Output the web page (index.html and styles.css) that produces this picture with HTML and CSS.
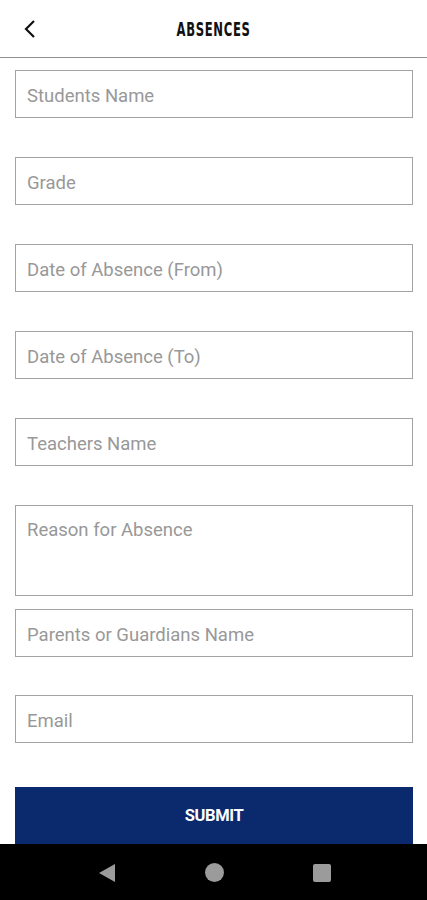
FILE: index.html
```html
<!DOCTYPE html>
<html lang="en">
<head>
    <meta charset="UTF-8">
    <meta name="viewport" content="width=device-width, initial-scale=1.0">
    <title>Absences</title>
    <link rel="stylesheet" href="styles.css">
</head>
<body>
    <div class="screen">
        <header class="top-bar">
            <button class="back" aria-label="Back">
                <svg width="14" height="20" viewBox="0 0 14 20">
                    <path d="M11 2 L3 10 L11 18" fill="none" stroke="#111" stroke-width="2.2"/>
                </svg>
            </button>
            <h1>ABSENCES</h1>
        </header>

        <form class="absence-form" id="absenceForm">
            <input type="text" class="field" placeholder="Students Name">
            <input type="text" class="field" placeholder="Grade">
            <input type="text" class="field" placeholder="Date of Absence (From)">
            <input type="text" class="field" placeholder="Date of Absence (To)">
            <input type="text" class="field" placeholder="Teachers Name">
            <textarea class="field reason" placeholder="Reason for Absence"></textarea>
            <input type="text" class="field parents" placeholder="Parents or Guardians Name">
            <input type="email" class="field email" placeholder="Email">
            <button type="submit" class="submit">SUBMIT</button>
        </form>

        <nav class="system-nav">
            <svg width="18" height="20" viewBox="0 0 18 20">
                <path d="M17 1 L17 19 L1 10 Z" fill="#9b9b9b"/>
            </svg>
            <span class="home"></span>
            <span class="recent"></span>
        </nav>
    </div>
</body>
</html>
```
FILE: styles.css
```css
/* General Styles */
* {
    box-sizing: border-box;
}

body {
    margin: 0;
    padding: 0;
    font-family: Roboto, "Liberation Sans", sans-serif;
    background: #fff;
}

.screen {
    width: 427px;
    height: 900px;
    display: flex;
    flex-direction: column;
    overflow: hidden;
}

/* Header */
.top-bar {
    height: 58px;
    flex-shrink: 0;
    display: flex;
    align-items: center;
    justify-content: center;
    position: relative;
    border-bottom: 1px solid #8e8e8e;
}

.top-bar h1 {
    margin: 0;
    font-family: "DejaVu Sans Condensed", "DejaVu Sans", sans-serif;
    font-stretch: condensed;
    font-weight: bold;
    font-size: 19px;
    letter-spacing: 1px;
    color: #111;
    transform: scaleX(0.68);
}

.back {
    position: absolute;
    left: 20px;
    top: 19px;
    background: none;
    border: none;
    padding: 0;
    width: 20px;
    height: 20px;
    display: flex;
    align-items: center;
    justify-content: center;
}

/* Form */
.absence-form {
    flex: 1;
    display: flex;
    flex-direction: column;
    padding: 12px 14px 0 15px;
}

.field {
    height: 48px;
    margin: 0 0 39px;
    padding: 3px 11px 0;
    border: 1px solid #a3a3a3;
    border-radius: 0;
    font-family: Roboto, "Liberation Sans", sans-serif;
    font-size: 18.5px;
    color: #333;
    background: #fff;
    outline: none;
}

.field::placeholder {
    color: #989898;
}

.reason {
    height: 91px;
    margin-bottom: 13px;
    padding-top: 13px;
    resize: none;
    line-height: 22px;
}

.parents {
    margin-bottom: 38px;
}

.email {
    margin-bottom: 44px;
}

.submit {
    height: 57px;
    background: #0b2a6e;
    color: #fff;
    border: none;
    font-family: Roboto, "Liberation Sans", sans-serif;
    font-weight: bold;
    font-size: 16.5px;
    letter-spacing: -0.4px;
    cursor: pointer;
}

/* Android nav bar */
.system-nav {
    height: 57px;
    flex-shrink: 0;
    background: #000;
    display: flex;
    align-items: center;
    justify-content: space-between;
    padding: 0 96px 0 98px;
}

.home {
    width: 19px;
    height: 19px;
    border-radius: 50%;
    background: #9b9b9b;
}

.recent {
    width: 18px;
    height: 18px;
    border-radius: 2px;
    background: #9b9b9b;
}
```
